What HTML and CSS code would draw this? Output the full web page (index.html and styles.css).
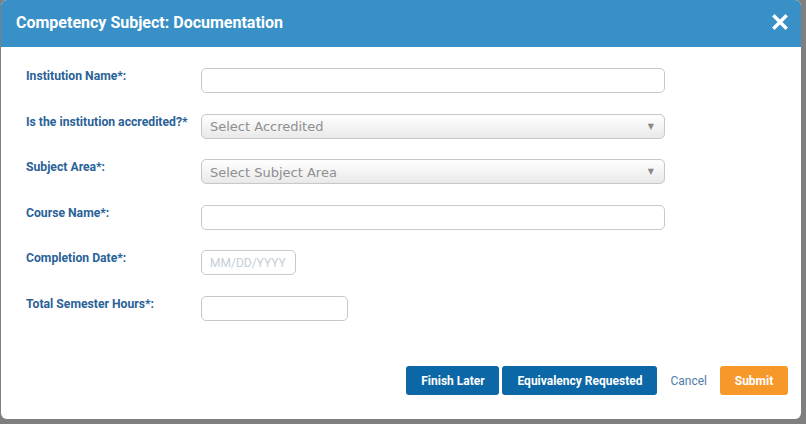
FILE: index.html
```html
<!DOCTYPE html>
<html>
<head>
<meta charset="utf-8">
<link rel="stylesheet" href="styles.css">
</head>
<body>
<div class="modal">
  <div class="modal-header">
    <h1 class="title">Competency Subject: Documentation</h1>
    <button class="close" aria-label="Close">
      <svg width="16" height="16" viewBox="0 0 16 16"><path d="M2.5 2.5 L13.5 13.5 M13.5 2.5 L2.5 13.5" stroke="#fff" stroke-width="3.4" stroke-linecap="square"/></svg>
    </button>
  </div>
  <div class="modal-body">
    <div class="row">
      <label class="label">Institution Name*:</label>
      <div class="field input wide"></div>
    </div>
    <div class="row">
      <label class="label">Is the institution accredited?*</label>
      <div class="field select wide"><span>Select Accredited</span><span class="arrow">&#9660;</span></div>
    </div>
    <div class="row">
      <label class="label">Subject Area*:</label>
      <div class="field select wide"><span>Select Subject Area</span><span class="arrow">&#9660;</span></div>
    </div>
    <div class="row">
      <label class="label">Course Name*:</label>
      <div class="field input wide"></div>
    </div>
    <div class="row">
      <label class="label">Completion Date*:</label>
      <div class="field input date"><span class="placeholder">MM/DD/YYYY</span></div>
    </div>
    <div class="row">
      <label class="label">Total Semester Hours*:</label>
      <div class="field input hours"></div>
    </div>
  </div>
  <div class="modal-footer">
    <button class="btn btn-blue">Finish Later</button>
    <button class="btn btn-blue btn-eq">Equivalency Requested</button>
    <span class="cancel">Cancel</span>
    <button class="btn btn-orange">Submit</button>
  </div>
</div>
</body>
</html>
```

FILE: styles.css
```css
html, body {
  margin: 0;
  padding: 0;
}
body {
  width: 806px;
  height: 424px;
  background: #7f7f7f;
  font-family: Roboto, "Liberation Sans", sans-serif;
  overflow: hidden;
}
.modal {
  margin-left: 1px;
  width: 800px;
  height: 419px;
  background: #fff;
  border-radius: 6px;
  overflow: hidden;
  display: flex;
  flex-direction: column;
}
.modal-header {
  height: 47px;
  background: #3990c6;
  display: flex;
  align-items: center;
  justify-content: space-between;
  padding: 0 13px 0 15px;
  flex-shrink: 0;
}
.title {
  margin: 0;
  color: #fff;
  font-size: 16px;
  font-weight: 700;
  line-height: 20px;
  margin-top: -2px;
}
.close {
  background: none;
  border: 0;
  padding: 0;
  width: 16px;
  height: 16px;
  margin-top: -3px;
  display: flex;
}
.modal-body {
  padding: 21px 0 0 25px;
  display: flex;
  flex-direction: column;
  gap: 20.6px;
}
.row {
  display: flex;
  align-items: flex-start;
}
.label {
  width: 175px;
  flex-shrink: 0;
  color: #2a6298;
  font-size: 12.2px;
  font-weight: 700;
  line-height: 14px;
  padding-top: 1px;
}
.field {
  box-sizing: border-box;
  height: 25px;
  border: 1px solid #c8c8c8;
  border-radius: 5px;
  background: #fff;
}
.wide { width: 464px; }
.date { width: 95px; }
.hours { width: 147px; }
.select {
  background: linear-gradient(#ffffff 0%, #f4f4f4 50%, #e9e9e9 100%);
  display: flex;
  align-items: center;
  justify-content: space-between;
  padding: 0 10px 0 8px;
  font-family: "DejaVu Sans", Verdana, sans-serif;
  font-size: 13px;
  color: #8f8f8f;
  box-shadow: inset 0 0 2px rgba(0,0,0,0.04);
}
.select span:first-child {
  padding-top: 1px;
}
.arrow {
  font-size: 8px;
  color: #888;
}
.date {
  display: flex;
  align-items: center;
  padding-left: 8px;
}
.placeholder {
  color: #c3ced8;
  font-size: 12px;
}
.modal-footer {
  margin-top: auto;
  display: flex;
  justify-content: flex-end;
  align-items: center;
  padding: 0 13px 24px 0;
}
.btn {
  height: 29px;
  border: 0;
  border-radius: 3px;
  font-family: Roboto, "Liberation Sans", sans-serif;
  font-weight: 700;
  font-size: 12px;
  color: #fff;
  padding: 0;
}
.btn-blue {
  background: #0b67a5;
  width: 93px;
}
.btn-eq {
  width: 155px;
  margin-left: 3px;
}
.cancel {
  color: #4f7ca9;
  font-size: 12px;
  margin: 1px 13px 0 13px;
}
.btn-orange {
  background: #f7982b;
  width: 68px;
}
```
